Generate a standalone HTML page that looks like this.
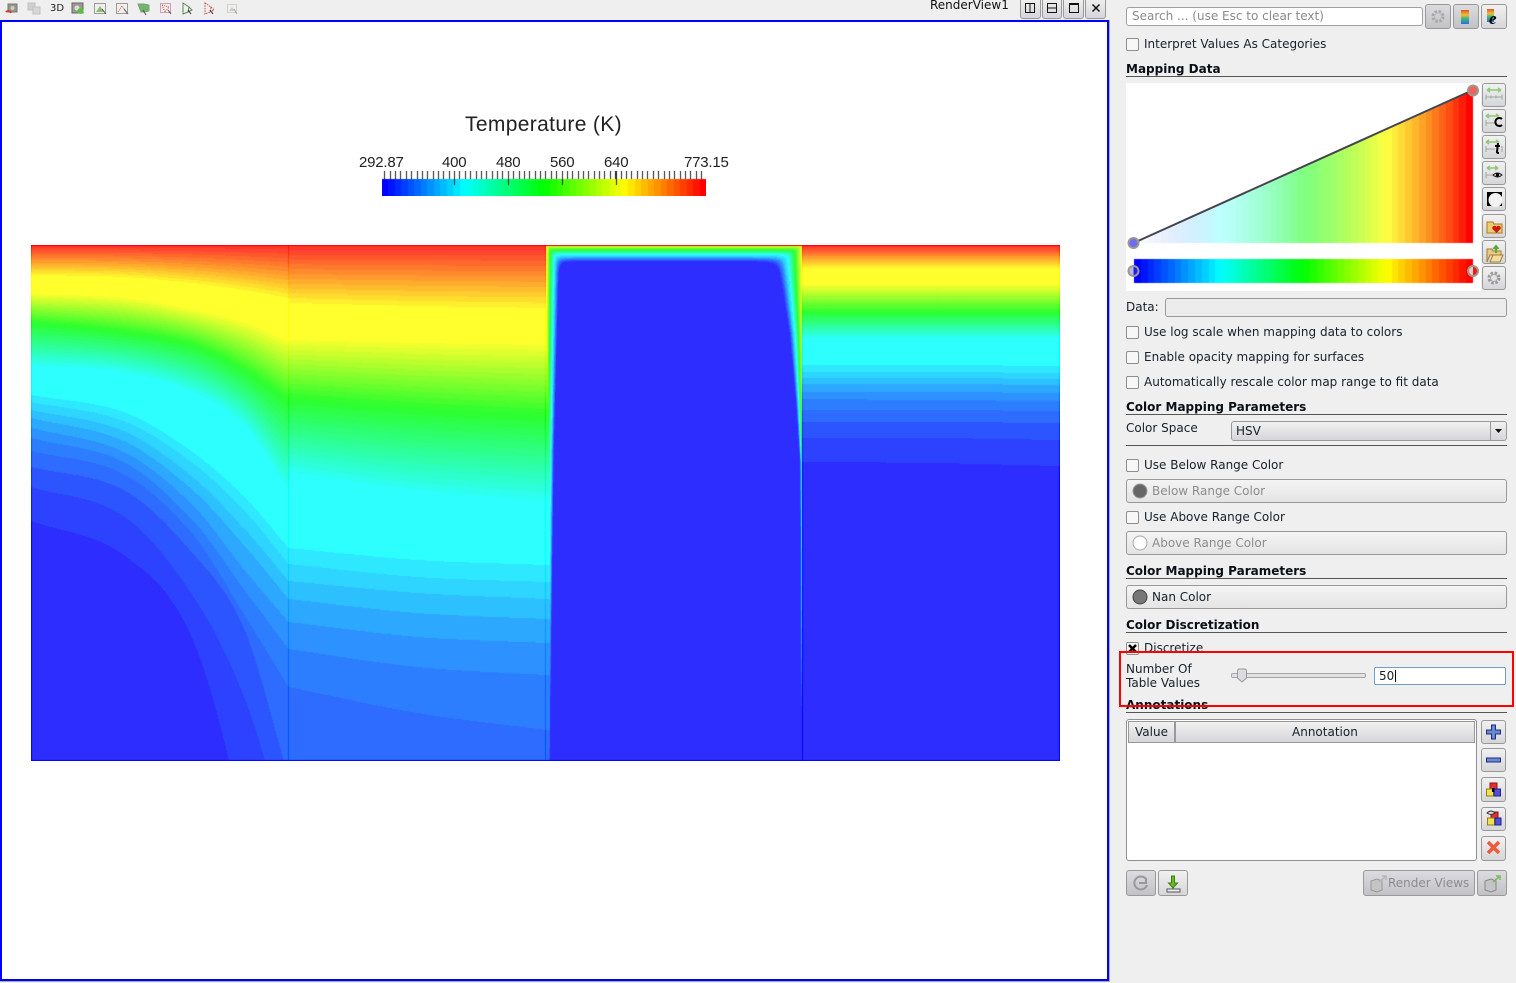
<!DOCTYPE html>
<html><head><meta charset="utf-8"><title>RenderView1</title>
<style>
html,body{margin:0;padding:0;background:#efefef;width:1516px;height:983px;overflow:hidden}
body{position:relative;font-family:"DejaVu Sans","Liberation Sans",sans-serif;font-size:12px;color:#17202b}
.a{position:absolute}
.t{position:absolute;white-space:nowrap;line-height:14px}
.h{position:absolute;white-space:nowrap;line-height:14px;font-weight:bold;left:1126px;color:#0a0f16}
.l{position:absolute;left:1126px;width:381px;height:1px;background:#555}
.c{position:absolute;left:1126px;width:11px;height:11px;border:1px solid #8f8f8f;border-radius:2px;background:#f7f7f7}
.b{position:absolute;box-sizing:border-box;border:1px solid #999;border-radius:3px;background:linear-gradient(#f1f1f1,#d6d6da)}
.d{background:linear-gradient(#dcdce0,#c2c2c6)}
.w{position:absolute;box-sizing:border-box;left:1126px;width:381px;height:24px;border:1px solid #999;border-radius:3px;background:linear-gradient(#f4f4f4,#e4e4e4)}
.v{position:absolute;font-family:"Liberation Sans",sans-serif;white-space:nowrap;color:#222}
svg{position:absolute;overflow:visible}
</style></head><body>

<!-- toolbar icons -->
<svg class="a" style="left:0;top:0" width="240" height="18">
<g fill="none" stroke-width="1">
<rect x="8" y="4" width="9" height="8" fill="#9a9488" stroke="#777"/><circle cx="12.5" cy="8" r="2" fill="#ccc"/><path d="M6 12a3 3 0 0 1 5 1" stroke="#c8452c" stroke-width="2"/>
<g opacity=".45"><rect x="28" y="3" width="7" height="7" fill="#aaa" stroke="#888"/><rect x="33" y="7" width="7" height="7" fill="#bbb" stroke="#888"/></g>
<rect x="72" y="3" width="11" height="10" fill="#9c9a8e" stroke="#666"/><circle cx="77" cy="8" r="2.5" fill="#ddd"/><circle cx="80.5" cy="11" r="3" fill="#5cc03c"/>
<rect x="94.500" y="3.500" width="11" height="10" stroke="#444" stroke-dasharray="1 1"/><path d="M96 12l4-6 4 6z" fill="#8dbb6c"/><path d="M102 9l4 5" stroke="#555"/>
<rect x="116.500" y="3.500" width="11" height="10" stroke="#444" stroke-dasharray="1 1"/><path d="M118 12l4-6 4 6" stroke="#d8694f" stroke-dasharray="1 1"/><path d="M124 9l4 5" stroke="#555"/>
<path d="M138 4h6l5 1v6l-5 1h-3z" fill="#6fb56a" stroke="#8a9a80"/><path d="M143 10l3 5" stroke="#555"/>
<rect x="160.500" y="3.500" width="10" height="9" stroke="#a58" stroke-dasharray="1 1"/><path d="M162 5l7 2-4 5z" stroke="#e0503a" stroke-dasharray="1 1"/><path d="M168 10l3 4" stroke="#555"/>
<path d="M183 3l6 4-1 5-5 2zM189 7l3 3-4 2" stroke="#5d8a58"/><path d="M188 10l3 4" stroke="#333"/>
<path d="M205 3l6 4-1 5-5 2zM211 7l3 3-4 2" stroke="#c0504a" stroke-dasharray="1.500 1"/><path d="M210 10l3 4" stroke="#333"/>
<g opacity=".5"><rect x="227.500" y="4.500" width="9" height="8" stroke="#777" stroke-dasharray="1 1"/><path d="M229 11l3-4 3 4z" fill="#9bbb8c"/><path d="M234 9l3 5" stroke="#666"/></g>
</g></svg>
<div class="t" style="left:50px;top:2px;font-size:10px;color:#222">3D</div>

<div class="t" style="left:930px;top:-2px;color:#111">RenderView1</div>
<div class="b" style="left:1020px;top:-3px;width:21px;height:22px"></div>
<div class="b" style="left:1042px;top:-3px;width:20px;height:22px"></div>
<div class="b" style="left:1063px;top:-3px;width:21px;height:22px"></div>
<div class="b" style="left:1085px;top:-3px;width:21px;height:22px"></div>
<svg class="a" style="left:1020px;top:0" width="90" height="20"><g fill="none" stroke="#111">
<rect x="5.500" y="3.500" width="9" height="9"/><path d="M10 3.500v9"/>
<rect x="27.500" y="3.500" width="9" height="9"/><path d="M27.500 8h9"/>
<rect x="49.500" y="3.500" width="9" height="9"/><path d="M49.500 4.500h9"/>
<path d="M72.500 4.500l7 7M79.500 4.500l-7 7" stroke-width="1.500"/></g></svg>

<!-- render view -->
<div class="a" style="left:0;top:20px;width:1105px;height:957px;border:2px solid #0000ff;background:#fff"></div>
<div class="a" style="left:1109px;top:20px;width:1px;height:962px;background:#aaa"></div>
<div class="a" style="left:0;top:981px;width:1110px;height:1px;background:#aaa"></div>

<div class="v" style="left:465px;top:112px;font-size:21px;line-height:25px;font-weight:normal;letter-spacing:.35px">Temperature (K)</div>
<div class="v" style="left:359px;top:154px;font-size:15px;line-height:17px;letter-spacing:-.2px">292.87</div>
<div class="v" style="left:442px;top:154px;font-size:15px;line-height:17px;letter-spacing:-.2px">400</div>
<div class="v" style="left:496px;top:154px;font-size:15px;line-height:17px;letter-spacing:-.2px">480</div>
<div class="v" style="left:550px;top:154px;font-size:15px;line-height:17px;letter-spacing:-.2px">560</div>
<div class="v" style="left:604px;top:154px;font-size:15px;line-height:17px;letter-spacing:-.2px">640</div>
<div class="v" style="left:684px;top:154px;font-size:15px;line-height:17px;letter-spacing:-.2px">773.15</div>
<canvas id="leg" class="a" style="left:382px;top:171px" width="324" height="25"></canvas>
<canvas id="cv" class="a" style="left:31px;top:245px" width="1029" height="516"></canvas>

<!-- right panel -->
<div class="a" style="left:1126px;top:7px;width:295px;height:17px;border:1px solid #a0a0a0;border-radius:3px;background:#fff"></div>
<div class="t" style="left:1132px;top:9px;color:#8a8a8a">Search ... (use Esc to clear text)</div>
<div class="b d" style="left:1425px;top:4px;width:26px;height:25px"></div>
<div class="b d" style="left:1453px;top:4px;width:26px;height:25px"></div>
<div class="b" style="left:1481px;top:4px;width:26px;height:25px"></div>
<svg class="a" style="left:1425px;top:4px" width="82" height="25">
<defs><linearGradient id="rb" x1="0" y1="0" x2="0" y2="1"><stop offset="0" stop-color="#e8502a"/><stop offset=".35" stop-color="#f0c030"/><stop offset=".6" stop-color="#40b878"/><stop offset="1" stop-color="#2a70d8"/></linearGradient></defs>
<circle cx="13" cy="12.500" r="5" fill="none" stroke="#a8a8a8" stroke-width="3" stroke-dasharray="2.500 1.500"/><circle cx="13" cy="12.500" r="3.500" fill="none" stroke="#bbb"/>
<rect x="36" y="6" width="8" height="14" fill="url(#rb)"/>
<rect x="62" y="5" width="7" height="13" fill="url(#rb)"/><text x="64" y="20" font-family="Liberation Serif,serif" font-weight="bold" font-style="italic" font-size="17" fill="#000">e</text></svg>

<div class="c" style="top:38px"></div><div class="t" style="left:1144px;top:37px">Interpret Values As Categories</div>
<div class="h" style="top:62px">Mapping Data</div><div class="l" style="top:76px"></div>

<canvas id="ch" class="a" style="left:1126px;top:83px" width="355" height="208"></canvas>
<svg class="a" style="left:1126px;top:83px" width="355" height="208">
<path d="M7.500 160L347 7" stroke="#44444c" stroke-width="2" fill="none"/>
<g stroke="#9a9a8c" stroke-width="2">
<circle cx="7.500" cy="160" r="5" fill="#6c6cf4"/>
<circle cx="347" cy="7.500" r="5" fill="#f46060"/>
<circle cx="7.500" cy="188" r="5" fill="#b8b8e8"/>
<circle cx="347" cy="188" r="5" fill="#f0c8c8"/></g>
<path d="M7.500 184a4 4 0 0 1 0 8z" fill="#2020e8"/><path d="M347 184a4 4 0 0 1 0 8z" fill="#ee1a1a"/>
</svg>

<div class="b" style="left:1481.500px;top:83px;width:24.500px;height:24px"></div>
<div class="b" style="left:1481.500px;top:109px;width:24.500px;height:24px"></div>
<div class="b" style="left:1481.500px;top:135px;width:24.500px;height:24px"></div>
<div class="b" style="left:1481.500px;top:161px;width:24.500px;height:24px"></div>
<div class="b" style="left:1481.500px;top:187px;width:24.500px;height:24px"></div>
<div class="b" style="left:1481.500px;top:214px;width:24.500px;height:24px"></div>
<div class="b" style="left:1481.500px;top:240px;width:24.500px;height:24px"></div>
<div class="b" style="left:1481.500px;top:266px;width:24.500px;height:24px"></div>
<svg class="a" style="left:1481px;top:83px" width="26" height="208">
<g fill="none" stroke-width="1.500">
<path d="M6 7h14M6 7l3-2M6 7l3 2M20 7l-3-2M20 7l-3 2" stroke="#8fc878"/><path d="M5 14h16M5 11.500v5M10 12.500v3M15 12.500v3M21 11.500v5" stroke="#a0a8a0" stroke-width="1"/>
<path d="M5 33h13M5 33l3-2M5 33l3 2M18 33l-3-2" stroke="#8fc878"/><path d="M5 40h9M5 37v6" stroke="#a0a8a0" stroke-width="1"/><path d="M21 36a4 4 0 1 0 0 6" stroke="#000" stroke-width="2"/>
<path d="M5 59h13M5 59l3-2M5 59l3 2M18 59l-3-2" stroke="#8fc878"/><path d="M5 66h9M5 63v6M21 63v6" stroke="#a0a8a0" stroke-width="1"/><path d="M17 60l-1 9q0 1 2 1M14 63h5" stroke="#000" stroke-width="2"/>
<path d="M6 85h11M6 85l3-2M6 85l3 2M17 85l-3-2M17 85l-3 2" stroke="#8fc878"/><path d="M5 92h7M5 89v6" stroke="#a0a8a0" stroke-width="1"/><path d="M12 92q4.500-4 9 0q-4.500 4-9 0z" stroke="#222" stroke-width="1"/><circle cx="16.500" cy="92" r="1.700" fill="#000" stroke="none"/>
</g>
<rect x="6" y="109" width="15" height="14" fill="#000"/><circle cx="14.500" cy="117" r="7" fill="#f2f2f2"/>
<path d="M6 139h6l1 2h8v9H6z" fill="#f0cc70" stroke="#b07a18"/><path d="M15.500 150l-4-4a2 2 0 0 1 4-2a2 2 0 0 1 4 2z" fill="#c81818"/>
<path d="M6 166h5l1 2h8v4H9l-3 7z" fill="#e8c888" stroke="#a08030"/><path d="M9 179l3-7h10l-3 7z" fill="#f2dca0" stroke="#a08030"/><path d="M15 170v-6M12.500 166l2.500-3 2.500 3" stroke="#5aa838" stroke-width="2" fill="none"/>
<circle cx="13" cy="195" r="5" fill="none" stroke="#9a9a9a" stroke-width="3" stroke-dasharray="2.500 1.500"/><circle cx="13" cy="195" r="3.500" fill="none" stroke="#aaa"/>
</svg>

<div class="t" style="left:1126px;top:300px">Data:</div>
<div class="a" style="left:1165px;top:298px;width:340px;height:17px;border:1px solid #999;border-radius:3px;background:#ececec"></div>

<div class="c" style="top:326px"></div><div class="t" style="left:1144px;top:325px">Use log scale when mapping data to colors</div>
<div class="c" style="top:351px"></div><div class="t" style="left:1144px;top:350px">Enable opacity mapping for surfaces</div>
<div class="c" style="top:376px"></div><div class="t" style="left:1144px;top:375px">Automatically rescale color map range to fit data</div>

<div class="h" style="top:400px">Color Mapping Parameters</div><div class="l" style="top:414px"></div>
<div class="t" style="left:1126px;top:421px">Color Space</div>
<div class="b" style="left:1231px;top:421px;width:276px;height:20px"></div>
<div class="a" style="left:1490px;top:422px;width:1px;height:18px;background:#999"></div>
<div class="t" style="left:1236px;top:424px">HSV</div>
<svg class="a" style="left:1494px;top:428px" width="9" height="6"><path d="M1 1h7l-3.500 4z" fill="#111"/></svg>
<div class="l" style="top:445px"></div>

<div class="c" style="top:459px"></div><div class="t" style="left:1144px;top:458px">Use Below Range Color</div>
<div class="w" style="top:479px"></div>
<svg class="a" style="left:1132px;top:483px" width="16" height="16"><circle cx="8" cy="8" r="7" fill="#666" stroke="#999"/></svg>
<div class="t" style="left:1152px;top:484px;color:#8c8c8c">Below Range Color</div>

<div class="c" style="top:511px"></div><div class="t" style="left:1144px;top:510px">Use Above Range Color</div>
<div class="w" style="top:531px"></div>
<svg class="a" style="left:1132px;top:535px" width="16" height="16"><circle cx="8" cy="8" r="7" fill="#fff" stroke="#aaa"/></svg>
<div class="t" style="left:1152px;top:536px;color:#8c8c8c">Above Range Color</div>

<div class="h" style="top:564px">Color Mapping Parameters</div><div class="l" style="top:578px"></div>
<div class="w" style="top:585px"></div>
<svg class="a" style="left:1132px;top:589px" width="16" height="16"><circle cx="8" cy="8" r="7" fill="#777" stroke="#444"/></svg>
<div class="t" style="left:1152px;top:590px">Nan Color</div>

<div class="h" style="top:618px">Color Discretization</div><div class="l" style="top:632px"></div>
<div class="c" style="top:642px"></div>
<svg class="a" style="left:1126px;top:642px" width="13" height="13"><path d="M3 3l7 7M10 3l-7 7" stroke="#000" stroke-width="2.500"/></svg>
<div class="t" style="left:1144px;top:641px">Discretize</div>

<div class="a" style="left:1142px;top:652px;width:100px;height:6px;background:#efefef"></div>
<div class="t" style="left:1126px;top:662px">Number Of</div>
<div class="t" style="left:1126px;top:676px">Table Values</div>
<div class="a" style="left:1231px;top:673px;width:133px;height:3px;border:1px solid #a4a4a4;border-radius:2px;background:#e2e2e2"></div>
<svg class="a" style="left:1236px;top:668px" width="13" height="16"><path d="M1.500 3q0-2 2-2h5q2 0 2 2v7l-4.500 4-4.500-4z" fill="#dcdce0" stroke="#999"/></svg>
<div class="a" style="left:1374px;top:667px;width:130px;height:16px;border:1px solid #6f9fc4;border-radius:2px;background:#fff"></div>
<div class="t" style="left:1379px;top:669px">50</div>
<div class="a" style="left:1395px;top:670px;width:1px;height:12px;background:#000"></div>

<div class="h" style="top:698px">Annotations</div><div class="l" style="top:712px"></div>
<div class="a" style="left:1119px;top:651px;width:391px;height:52px;border:2px solid #f00"></div>

<div class="a" style="left:1126px;top:719px;width:349px;height:140px;border:1px solid #8f8f8f;border-radius:3px;background:#fff"></div>
<div class="b" style="left:1128px;top:721px;width:47px;height:22px;border-radius:0"></div>
<div class="b" style="left:1175px;top:721px;width:300px;height:22px;border-radius:0"></div>
<div class="t" style="left:1135px;top:725px">Value</div>
<div class="t" style="left:1292px;top:725px">Annotation</div>

<div class="b" style="left:1481px;top:720px;width:25px;height:24px"></div>
<div class="b" style="left:1481px;top:748px;width:25px;height:24px"></div>
<div class="b" style="left:1481px;top:777px;width:25px;height:25px"></div>
<div class="b" style="left:1481px;top:807px;width:25px;height:24px"></div>
<div class="b" style="left:1481px;top:836px;width:25px;height:25px"></div>
<svg class="a" style="left:1481px;top:720px" width="25" height="141">
<path d="M10.500 5h4v5h5v4h-5v5h-4v-5h-5v-4h5z" fill="#6a8ad0" stroke="#1c2c80"/>
<rect x="5.500" y="38" width="14" height="4" fill="#6a8ad0" stroke="#1c2c80"/>
<rect x="9" y="63" width="7" height="7" fill="#e03030" stroke="#901010"/><rect x="5.500" y="69" width="7" height="7" fill="#f0e050" stroke="#908010"/><rect x="13" y="69" width="6.500" height="7" fill="#5050d0" stroke="#202090"/><rect x="11" y="68" width="2.500" height="4" fill="#000"/>
<rect x="10" y="92" width="7" height="8" fill="#e03030" stroke="#901010"/><rect x="6.500" y="98" width="7" height="7" fill="#f0e050" stroke="#908010"/><rect x="14" y="98" width="6" height="7" fill="#5050d0" stroke="#202090"/><path d="M6 93q4-4 8 0q-4 3-8 0z" fill="#ddd" stroke="#334"/>
<path d="M7 122l11 11M18 122l-11 11" stroke="#ee5a3a" stroke-width="3.500"/>
</svg>

<div class="b d" style="left:1126px;top:870px;width:30px;height:26px"></div>
<div class="b" style="left:1158px;top:870px;width:30px;height:26px"></div>
<div class="b d" style="left:1363px;top:870px;width:112px;height:26px"></div>
<div class="b d" style="left:1477px;top:870px;width:30px;height:26px"></div>
<svg class="a" style="left:1126px;top:870px" width="381" height="26">
<path d="M20 9a6.500 6.500 0 1 0 1 6M13 13h7V8" fill="none" stroke="#999" stroke-width="2"/>
<path d="M45.500 6h3v7h3l-4.500 5-4.500-5h3z" fill="#68b828" stroke="#3a8010"/><path d="M41 19h13v3H41z" fill="#eee" stroke="#555"/>
<g fill="#c4c4c4" stroke="#999"><path d="M245 11l6-2 5 2v9l-5 2-6-2z"/></g><path d="M253 12l6-5M256 6h4v4" stroke="#b8b8b8" stroke-width="1.500" fill="none"/>
<g fill="#c4c4c4" stroke="#888"><path d="M359 11l6-2 5 2v9l-5 2-6-2z"/></g><path d="M367 12l6-5M370 6h4v4" stroke="#7cb868" stroke-width="1.500" fill="none"/>
</svg>
<div class="t" style="left:1388px;top:876px;color:#8c8c8c">Render Views</div>

<script>
function spline(xs,ys,x){var n=xs.length,i=0;if(x<=xs[0])return ys[0];if(x>=xs[n-1])return ys[n-1];
while(x>xs[i+1])i++;
function m(j){if(j<=0)return (ys[1]-ys[0])/(xs[1]-xs[0]);if(j>=n-1)return (ys[n-1]-ys[n-2])/(xs[n-1]-xs[n-2]);return (ys[j+1]-ys[j-1])/(xs[j+1]-xs[j-1]);}
var h=xs[i+1]-xs[i],t=(x-xs[i])/h,t2=t*t,t3=t2*t;
return (2*t3-3*t2+1)*ys[i]+(t3-2*t2+t)*h*m(i)+(-2*t3+3*t2)*ys[i+1]+(t3-t2)*h*m(i+1);}
function hsv(h){h=((h%360)+360)%360;var s=h/60,i=Math.floor(s),f=s-i;
switch(i){case 0:return[255,255*f,0];case 1:return[255*(1-f),255,0];case 2:return[0,255,255*f];case 3:return[0,255*(1-f),255];case 4:return[255*f,0,255];default:return[255,0,255*(1-f)];}}
var G=[45,66,85,108,126,146,168,192,213,232,255];
function col(k,pure){k=Math.max(0,Math.min(48,Math.round(k)));var c;
if(k<=10){var g=(G[k]-45)*255/210;c=[0,g,255];}else{var t=Math.min(1,(k-10)/37.5);c=hsv(180*(1-t));}
if(pure)return c;return[45+c[0]*210/255,45+c[1]*210/255,45+c[2]*210/255];}

var C1={xs:[31,123,192,244,288],c:[
[47.5,[245,245,245,245,245]],[35.49,[275,277,283,290,298]],[34.5,[294,298,310,323,342]],[22.5,[322,332,345,370,400]],[10.49,[365,372,392,425,490]],
[9.5,[395,412,452,497,548]],[8.5,[402,421,463,511,564]],[7.5,[410,431,477,529,581]],[6.5,[418,441,490,546,599]],[5.5,[428,452,505,570,622]],[4.5,[438,462,520,590,649]],[3.5,[451,474,534,615,687]],[2.5,[467,490,553,630,777]],[1.5,[487,516,595,698,840]],[.5,[521,555,639,830,1090]],[-1,[2000,2000,2000,2000,2000]]]};
var C2={xs:[288,417,546],c:[
[47.5,[245,245,245]],[35.49,[303,306,308]],[34.5,[340,343,345]],[22.5,[398,408,415]],[10.49,[472,490,500]],
[9.5,[548,560,565]],[8.5,[564,577,582]],[7.5,[581,593,599]],[6.5,[599,613,619]],[5.5,[622,637,643]],[4.5,[649,667,675]],[3.5,[687,713,730]],[2.6,[2000,2000,2000]]]};
var C4={xs:[802,931,1060],c:[
[47.5,[245,245,245]],[35.49,[268,268,268]],[34.5,[285,285,285]],[22.5,[312,312,312]],[10.49,[338,338,338]],
[9.5,[365,365,366]],[8.5,[372,372,373]],[7.5,[378,378,379]],[6.5,[384,384,385]],[5.5,[392,392,393]],[4.5,[399,400,401]],[3.5,[410,410,411]],[2.5,[422,422,423]],[1.5,[438,438,440]],[.5,[462,463,466]],[-1,[2000,2000,2000]]]};
function columnVals(S,x){var ys=[],vs=[],prev=-1e9;S.c.forEach(function(q){var y=spline(S.xs,q[1],x);if(y<=prev)y=prev+.01;prev=y;ys.push(y);vs.push(q[0]);});return[ys,vs];}
function valAt(r,yy){var ys=r[0],vs=r[1],j=0;if(yy<=ys[0])return vs[0];while(j<ys.length-2&&yy>ys[j+1])j++;return vs[j]+(vs[j+1]-vs[j])*(yy-ys[j])/(ys[j+1]-ys[j]);}
function lerpTable(tb,x){if(x<=tb[0][0])return tb[0][1];for(var i=1;i<tb.length;i++){if(x<=tb[i][0]){var a=tb[i-1],b=tb[i];return a[1]+(b[1]-a[1])*(x-a[0])/(b[0]-a[0]);}}return tb[tb.length-1][1];}
var sL=[[265,1],[450,.62],[761,.28]],sR=[[265,1],[335,.55],[400,.3],[463,.12],[761,.05]],dV=[[0,36],[1.5,33],[5.5,22.5],[10,10],[12,8],[17,0]];
var eL=columnVals(C2,545),eR=columnVals(C4,802);
function rimV(x,y){var a=Math.max(.01,y-245+.5),b=Math.max(.01,(x-546+.5)*1.3/lerpTable(sL,y)),c=Math.max(.01,(802-x+.5)*.7/lerpTable(sR,y));
var d=Math.pow(Math.pow(a,-4)+Math.pow(b,-4)+Math.pow(c,-4),-.25),v=lerpTable(dV,d);
return x<674?Math.min(v,valAt(eL,y)):v;}
var cv=document.getElementById('cv'),ctx=cv.getContext('2d'),W=1029,H=516,img=ctx.createImageData(W,H),D=img.data;
function put(x,y,c){var i=((y-245)*W+(x-31))*4;D[i]=c[0];D[i+1]=c[1];D[i+2]=c[2];D[i+3]=255;}
function doCol(S,x,pure){var r=columnVals(S,x);for(var y=245;y<=760;y++)put(x,y,col(valAt(r,y+.5),pure));}
var x,y;
for(x=31;x<288;x++)doCol(C1,x);
for(x=288;x<546;x++)doCol(C2,x);
for(x=546;x<802;x++){for(y=245;y<=760;y++)put(x,y,col(rimV(x,y+.5)));}
for(x=802;x<1060;x++)doCol(C4,x);
doCol(C1,288,true);doCol(C2,545,true);doCol(C4,802,true);doCol(C1,31,true);doCol(C4,1059,true);
for(x=31;x<1060;x++){put(x,245,[255,0,0]);put(x,760,[0,0,255]);}
ctx.putImageData(img,0,0);

function lut(i){var c=hsv(240*(1-i/49));return c;}
function rgb(c){return'rgb('+Math.round(c[0])+','+Math.round(c[1])+','+Math.round(c[2])+')';}
var l=document.getElementById('leg').getContext('2d'),i;
for(i=0;i<50;i++){l.fillStyle=rgb(lut(i));var a0=Math.round(i*6.48),a1=Math.round((i+1)*6.48);l.fillRect(a0,8,a1-a0,17);}
l.fillStyle='#222';
for(i=0;i<60;i++){l.fillRect(Math.round(2.3+i*5.37),0,1,8);}
[72.3,126.3,180.3,234.3].forEach(function(p){l.fillRect(Math.round(p),0,1,14);});

var ch=document.getElementById('ch').getContext('2d');
ch.fillStyle='#fff';ch.fillRect(0,0,355,208);
var bx=8,bw=339,st=bw/50;
for(i=0;i<50;i++){var xa=Math.round(bx+i*st),xb=Math.round(bx+(i+1)*st);ch.fillStyle=rgb(lut(i));ch.fillRect(xa,176,xb-xa,24);}
ch.save();ch.beginPath();ch.moveTo(8,160);ch.lineTo(347,7);ch.lineTo(347,160);ch.closePath();ch.clip();
for(i=0;i<50;i++){var xa2=Math.round(bx+i*st),xb2=Math.round(bx+(i+1)*st),c=lut(i),f=(i+.5)/50;
ch.fillStyle=rgb([255+(c[0]-255)*f,255+(c[1]-255)*f,255+(c[2]-255)*f]);ch.fillRect(xa2,0,xb2-xa2,160);}
ch.restore();
</script>
</body></html>
